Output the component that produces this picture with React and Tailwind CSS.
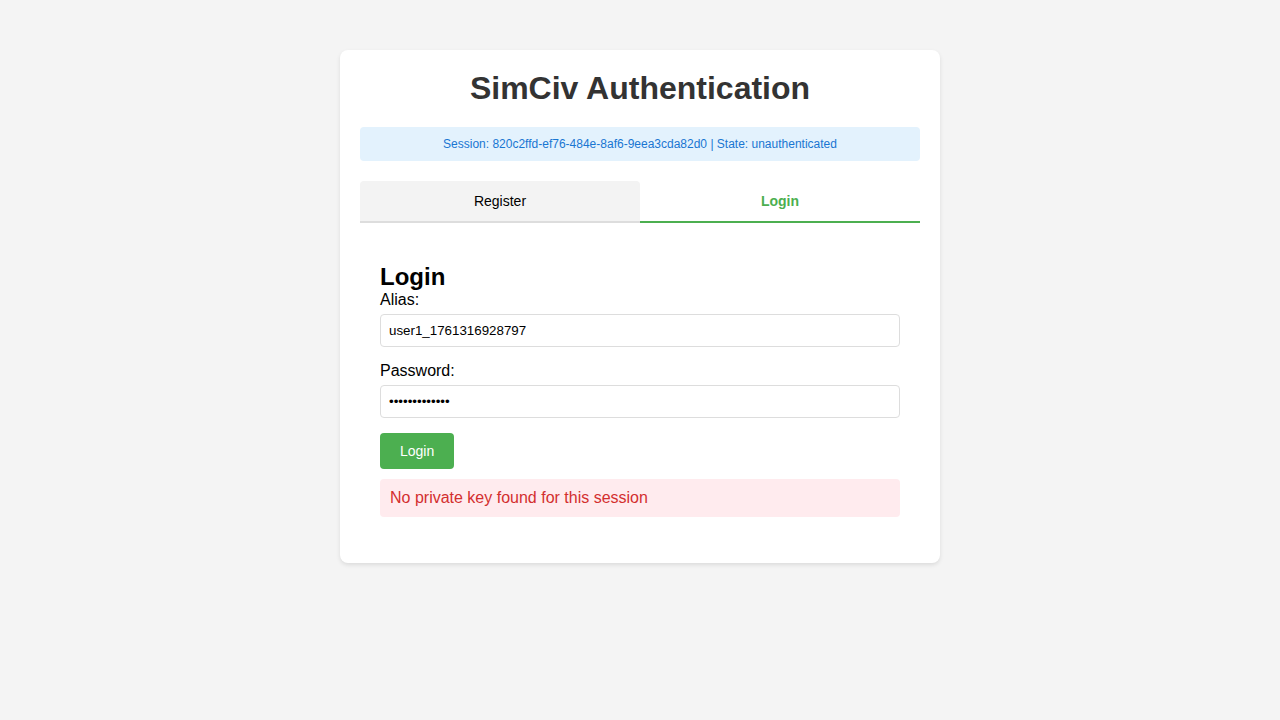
import React, { useState } from 'react';

const App = () => {
    const [tab, setTab] = useState('login');
    const [alias, setAlias] = useState('user1_1761316928797');
    const [password, setPassword] = useState('password12345');

    return (
        <div className="min-h-screen bg-[#f4f4f4] pt-[50px] font-['Liberation_Sans',Arial,sans-serif]">
            <div className="mx-auto w-[600px] rounded-lg bg-white p-5 pb-[26px] shadow-[0_2px_4px_rgba(0,0,0,0.1)]">
                <h1 className="mb-5 text-center text-[32px] leading-[37px] font-bold text-[#333]">
                    SimCiv Authentication
                </h1>

                {/* Session info */}
                <div className="mb-5 rounded bg-[#e3f2fd] p-2.5 text-center text-xs leading-[14px] text-[#1976d2]">
                    Session: 820c2ffd-ef76-484e-8af6-9eea3cda82d0 | State: unauthenticated
                </div>

                {/* Tabs */}
                <div className="flex">
                    <button
                        onClick={() => setTab('register')}
                        className={`flex-1 rounded-t border-b-2 py-3 text-sm leading-4 ${tab === 'register' ? 'border-[#4caf50] bg-white font-bold text-[#4caf50]' : 'border-[#ddd] bg-[#f3f3f3] text-black'}`}
                    >
                        Register
                    </button>
                    <button
                        onClick={() => setTab('login')}
                        className={`flex-1 rounded-t border-b-2 py-3 text-sm leading-4 ${tab === 'login' ? 'border-[#4caf50] bg-white font-bold text-[#4caf50]' : 'border-[#ddd] bg-[#f3f3f3] text-black'}`}
                    >
                        Login
                    </button>
                </div>

                {/* Form */}
                <div className="mt-5 p-5">
                    <h2 className="text-2xl leading-7 font-bold text-black">
                        {tab === 'login' ? 'Login' : 'Register'}
                    </h2>
                    <div className="mb-[15px]">
                        <label className="mb-[5px] block text-base leading-[18px] text-black">Alias:</label>
                        <input
                            type="text"
                            value={alias}
                            onChange={(e) => setAlias(e.target.value)}
                            className="block h-[33px] w-full rounded border border-[#ddd] px-2 text-[13.33px] text-black outline-none"
                        />
                    </div>
                    <div className="mb-[15px]">
                        <label className="mb-[5px] block text-base leading-[18px] text-black">Password:</label>
                        <input
                            type="password"
                            value={password}
                            onChange={(e) => setPassword(e.target.value)}
                            className="block h-[33px] w-full rounded border border-[#ddd] px-2 text-[13.33px] text-black outline-none"
                        />
                    </div>
                    <button className="rounded bg-[#4caf50] px-5 py-2.5 text-sm leading-4 text-white">
                        Login
                    </button>
                    <div className="mt-2.5 rounded bg-[#ffebee] px-2.5 py-2.5 text-base leading-[18px] text-[#d32f2f]">
                        No private key found for this session
                    </div>
                </div>
            </div>
        </div>
    );
};

export default App;
